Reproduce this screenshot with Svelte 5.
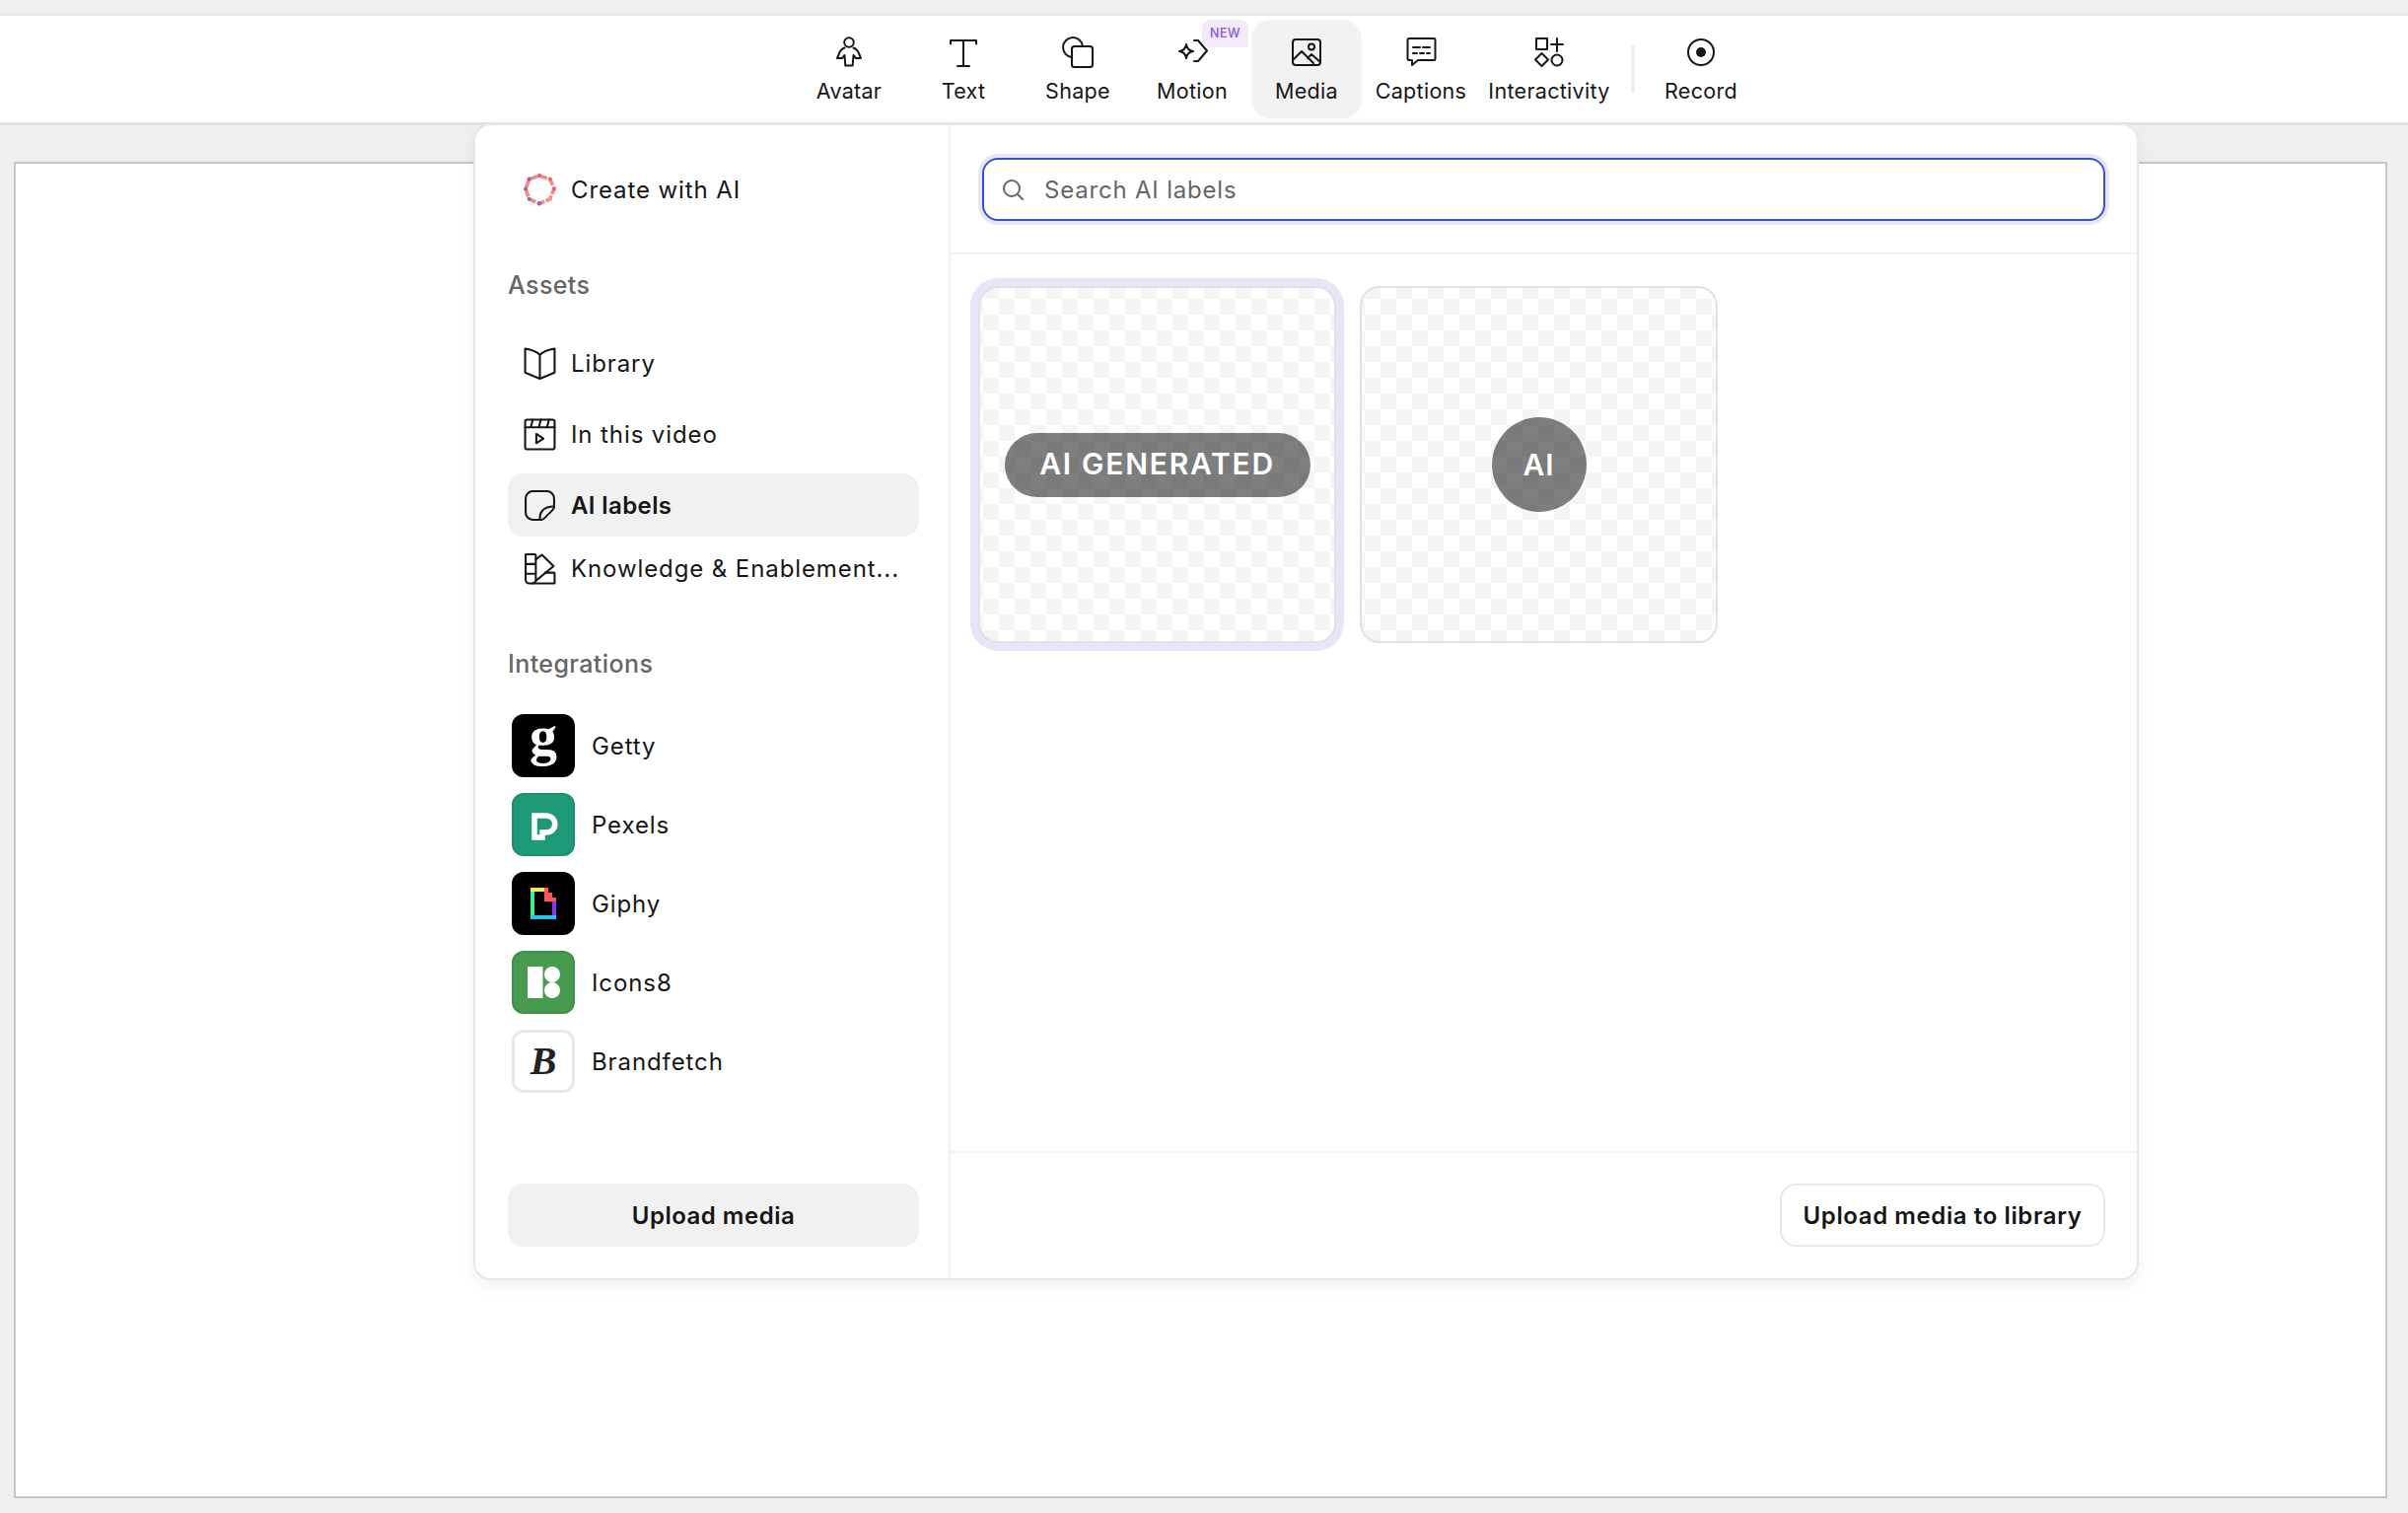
<script>
	const tools = ['Avatar', 'Text', 'Shape', 'Motion', 'Media', 'Captions', 'Interactivity'];
	const assets = [
		{ id: 'library', label: 'Library' },
		{ id: 'video', label: 'In this video' },
		{ id: 'labels', label: 'AI labels', active: true },
		{ id: 'brand', label: 'Knowledge & Enablement...' }
	];
	const integrations = ['Getty', 'Pexels', 'Giphy', 'Icons8', 'Brandfetch'];
	// corners of the "Create with AI" ring
	const ringPoints = [
		[15.5, 2, '#d9647c'],
		[26, 5.5, '#ee6a6a'],
		[30, 15, '#e8607a'],
		[26, 25, '#f0a090'],
		[15.5, 29.5, '#a05cc8'],
		[5.5, 25, '#9a5cc8'],
		[2, 15, '#b65cb0'],
		[5.5, 5.5, '#9a5cc8']
	];
	const ringOutline = ringPoints.map((p) => `${p[0]},${p[1]}`).join(' ');
</script>

<div class="page">
	<div class="topband"></div>
	<header class="toolbar">
		{#each tools as t}
			<div class="tool" class:on={t === 'Media'} class:wide={t === 'Interactivity'}>
				{#if t === 'Motion'}<span class="new">NEW</span>{/if}
				<svg class="tool-ico" viewBox="0 0 32 32" fill="none" stroke="currentColor" stroke-width="2" stroke-linecap="round" stroke-linejoin="round">
					{#if t === 'Avatar'}
						<circle cx="16" cy="6" r="4.800"/>
						<path d="M11.500 11.500c-3 1-5 3.500-6 7l-1.500 3.500h5l2.500-3 .8 10.500h7.400l.8-10.500 2.500 3h5l-1.500-3.500c-1-3.500-3-6-6-7"/>
					{:else if t === 'Text'}
						<path d="M3 7.500V4h26v3.500M16 4v26M10 30h12"/>
					{:else if t === 'Shape'}
						<path d="M10 21a10 10 0 1 1 11-11"/>
						<rect x="10" y="10" width="21" height="21" rx="2.500"/>
					{:else if t === 'Motion'}
						<path d="M10 8c.6 4.400 2.600 6.400 7 7-4.400.6-6.400 2.600-7 7-.6-4.400-2.600-6.400-7-7 4.400-.6 6.400-2.600 7-7Z"/>
						<path d="m18 4 4 0 9 10.500-9 10.500-4 0"/>
					{:else if t === 'Media'}
						<rect x="2" y="3" width="28" height="26" rx="3"/>
						<circle cx="21" cy="10.500" r="3"/>
						<path d="m2 24 9-9 12 12M17 22l4-4 9 8"/>
					{:else if t === 'Captions'}
						<path d="M4 2h25a1.500 1.500 0 0 1 1.500 1.500v19a1.500 1.500 0 0 1-1.500 1.500H13l-6 5v-5H4a1.500 1.500 0 0 1-1.500-1.500v-19A1.500 1.500 0 0 1 4 2Z"/>
						<path d="M8 11h7M18 11h7M8 17h4M15 17h4M22 17h3"/>
					{:else}
						<rect x="3" y="2" width="11" height="11"/>
						<path d="M24 2v13M18 8h12"/>
						<path d="m8.500 17 6.500 6.500-6.500 6.500L2 23.500Z"/>
						<circle cx="24" cy="24" r="5.500"/>
					{/if}
				</svg>
				<span class="tool-label">{t}</span>
			</div>
		{/each}
		<span class="tool-sep"></span>
		<div class="tool">
			<svg class="tool-ico" viewBox="0 0 32 32" fill="none" stroke="currentColor" stroke-width="2">
				<circle cx="16" cy="16" r="13"/>
				<circle cx="16" cy="16" r="5" fill="currentColor" stroke="none"/>
			</svg>
			<span class="tool-label">Record</span>
		</div>
	</header>

	<main class="stage">
		<div class="canvas"></div>
	</main>

	<section class="panel">
		<aside class="side">
			<div class="row create">
				<svg class="row-ico" viewBox="0 0 32 32" fill="none">
					<polygon points={ringOutline} stroke="#f28a80" stroke-width="3.500" stroke-dasharray="8 1.500"/>
					{#each ringPoints as [x, y, c]}
						<circle cx={x} cy={y} r="2" fill={c}/>
					{/each}
				</svg>
				<span>Create with AI</span>
			</div>

			<h3 class="head assets-head">Assets</h3>
			<ul class="asset-list">
				{#each assets as a}
					<li class="row" class:active={a.active}>
						<svg class="row-ico" viewBox="0 0 32 32" fill="none" stroke="currentColor" stroke-width="2" stroke-linecap="round" stroke-linejoin="round">
							{#if a.id === 'library'}
								<path d="M16 7.500C13 4.500 8 2.500 1.500 1.500v23.500l14.500 6 14.500-6V1.500C24 2.500 19 4.500 16 7.500Zm0 0V31"/>
							{:else if a.id === 'video'}
								<rect x="1.500" y="1.500" width="29" height="29" rx="2"/>
								<path d="M1.500 9h29M9 1.500 7 9M17 1.500 15 9M25 1.500 23 9"/>
								<path d="M12.500 15.500v9l7-4.500Z"/>
							{:else if a.id === 'labels'}
								<path d="M17 30H9a7 7 0 0 1-7-7V9a7 7 0 0 1 7-7h14a7 7 0 0 1 7 7v8c0 1.500-.5 2.500-1.500 3.500l-8 8c-1 1-2 1.500-3.500 1.500Z"/>
								<path d="M16 30c-.5-7 3-13 14-13"/>
							{:else}
								<path d="M2 2h9a1 1 0 0 1 1 1v24a3.500 3.500 0 0 1-3.500 3.500h-3A3.500 3.500 0 0 1 2 27V2ZM2 11.500h10M2 21h10"/>
								<path d="m12 7 6-4.500 11.500 11L12 28"/>
								<path d="M21 20h8.500a1 1 0 0 1 1 1v9.500H9"/>
							{/if}
						</svg>
						<span>{a.label}</span>
					</li>
				{/each}
			</ul>

			<h3 class="head int-head">Integrations</h3>
			<ul class="int-list">
				{#each integrations as name}
					<li class="int">
						<span class="tile {name.toLowerCase()}">
							{#if name === 'Getty'}
								<span class="getty-g">g</span>
							{:else if name === 'Pexels'}
								<svg viewBox="0 0 64 64" width="64" height="64"><path d="M23 23h12a8.500 8.500 0 0 1 .5 17H31v5h-8Z" fill="none" stroke="#fff" stroke-width="5.500"/></svg>
							{:else if name === 'Giphy'}
								<svg viewBox="0 0 64 64" width="64" height="64">
									<rect x="19" y="16" width="4" height="32" fill="#3df28f"/>
									<rect x="19" y="16" width="15" height="4" fill="#f7e75a"/>
									<rect x="41" y="26" width="4" height="22" fill="#8a32f5"/>
									<rect x="19" y="44" width="26" height="4" fill="#22c3f5"/>
									<path d="M33 16h4v5h4v5h4v4H33Z" fill="#fb5757"/>
								</svg>
							{:else if name === 'Icons8'}
								<svg viewBox="0 0 64 64" width="64" height="64" fill="#fff">
									<rect x="16" y="16" width="15.500" height="32"/>
									<circle cx="41" cy="24" r="8"/>
									<circle cx="41" cy="40" r="8"/>
								</svg>
							{:else}
								<span class="brand-b">B</span>
							{/if}
						</span>
						<span class="int-name">{name}</span>
					</li>
				{/each}
			</ul>

			<button class="upload">Upload media</button>
		</aside>

		<div class="content">
			<div class="search-wrap">
				<div class="search">
					<svg viewBox="0 0 24 24" width="24" height="24" fill="none" stroke="#666" stroke-width="2" stroke-linecap="round"><circle cx="11" cy="11" r="8"/><path d="m17 17 5 5"/></svg>
					<span>Search AI labels</span>
				</div>
			</div>
			<div class="grid">
				<div class="thumb selected"><span class="pill">AI GENERATED</span></div>
				<div class="thumb"><span class="circle">AI</span></div>
			</div>
			<footer class="foot">
				<button class="upload-lib">Upload media to library</button>
			</footer>
		</div>
	</section>
</div>

<style>
	:global(body) {
		margin: 0;
		background: #efeff1;
		font-family: Inter, 'Liberation Sans', sans-serif;
		color: #161616;
	}
	.page {
		position: relative;
		height: 1534px;
		display: flex;
		flex-direction: column;
		overflow: hidden;
	}
	.topband {
		height: 14px;
		flex-shrink: 0;
	}
	.toolbar {
		height: 108px;
		flex-shrink: 0;
		box-sizing: content-box;
		background: #fff;
		border-top: 2px solid #e6e6e8;
		border-bottom: 3px solid #e4e4e6;
		padding-left: 805px;
		display: flex;
		align-items: center;
		gap: 4px;
	}
	.tool {
		position: relative;
		width: 112px;
		height: 100px;
		flex-shrink: 0;
		border-radius: 20px;
		display: flex;
		flex-direction: column;
		align-items: center;
		gap: 9px;
		padding-top: 17px;
		box-sizing: border-box;
	}
	.tool.wide {
		width: 140px;
	}
	.tool.on {
		background: #f2f2f2;
	}
	.tool-ico {
		width: 32px;
		height: 32px;
		flex-shrink: 0;
	}
	.tool-label {
		font-size: 21.500px;
		line-height: 28px;
		letter-spacing: 0.3px;
		white-space: nowrap;
	}
	.tool-sep {
		width: 4px;
		height: 48px;
		margin: 0 7px 0 9px;
		border-radius: 2px;
		background: #efeff1;
		flex-shrink: 0;
	}
	.new {
		position: absolute;
		top: 0;
		right: -1px;
		height: 28px;
		padding: 0 8px;
		border-radius: 8px 8px 0 8px;
		background: #f1ebfb;
		color: #8a55e0;
		font-size: 12.500px;
		font-weight: 500;
		letter-spacing: 0.5px;
		line-height: 28px;
	}

	.stage {
		flex: 1;
		padding: 37px 21px 15px 14px;
		display: flex;
	}
	.canvas {
		flex: 1;
		background: #fff;
		border: 2px solid #c6c6c8;
	}

	.panel {
		position: absolute;
		left: 482px;
		top: 127px;
		width: 1685px;
		height: 1169px;
		display: flex;
		background: #fff;
		border-radius: 16px;
		box-shadow: 0 0 0 2px #e8e8e8, 0 6px 18px rgba(0, 0, 0, 0.08);
		overflow: hidden;
	}
	.side {
		width: 482px;
		flex-shrink: 0;
		box-sizing: border-box;
		padding: 33px 30px 32px 33px;
		border-right: 2px solid #f0f0f0;
		display: flex;
		flex-direction: column;
		font-size: 24px;
	}
	.row {
		height: 64px;
		display: flex;
		align-items: center;
		gap: 15px;
		padding-left: 16px;
		border-radius: 16px;
		letter-spacing: 0.9px;
		white-space: nowrap;
	}
	.row-ico {
		width: 33px;
		height: 33px;
		flex-shrink: 0;
	}
	.row.active {
		background: #f1f1f1;
		font-weight: 600;
		letter-spacing: 0.4px;
	}
	.head {
		margin: 0;
		font-size: 25px;
		line-height: 30px;
		font-weight: 500;
		letter-spacing: 0.4px;
		color: #666669;
	}
	.assets-head {
		margin-top: 50px;
		margin-bottom: 32px;
	}
	.int-head {
		margin-top: 50px;
		margin-bottom: 35.500px;
	}
	.asset-list,
	.int-list {
		list-style: none;
		margin: 0;
		padding: 0;
		display: flex;
		flex-direction: column;
	}
	.asset-list {
		gap: 8px;
	}
	.asset-list li:last-child {
		margin-top: -8px;
	}
	.int-list {
		gap: 16px;
		padding-left: 4px;
	}
	.int {
		height: 64px;
		display: flex;
		align-items: center;
		gap: 17px;
		letter-spacing: 0.9px;
	}
	.int-name {
		padding-top: 2px;
	}
	.tile {
		width: 64px;
		height: 64px;
		box-sizing: border-box;
		border-radius: 12px;
		display: flex;
		align-items: center;
		justify-content: center;
		flex-shrink: 0;
	}
	.tile svg {
		flex-shrink: 0;
	}
	.tile.getty,
	.tile.giphy {
		background: #000;
	}
	.tile.pexels {
		background: #1f9a78;
		border: 2px solid #218d70;
	}
	.tile.icons8 {
		background: #479b50;
		border: 2px solid #3f8f47;
	}
	.tile.brandfetch {
		background: #fff;
		border: 3px solid #e8e8e8;
	}
	.getty-g {
		color: #fff;
		font: 700 56px/1 'Liberation Serif', serif;
		margin-top: -20px;
		letter-spacing: 0;
	}
	.brand-b {
		color: #222;
		font: italic 700 40px/1 'Liberation Serif', serif;
		letter-spacing: 0;
	}
	.upload {
		margin-top: auto;
		height: 64px;
		border: 0;
		border-radius: 16px;
		background: #f1f1f1;
		color: #161616;
		font: 600 24px Inter, sans-serif;
		letter-spacing: 0.5px;
	}

	.content {
		flex: 1;
		min-width: 0;
		display: flex;
		flex-direction: column;
	}
	.search-wrap {
		height: 131px;
		flex-shrink: 0;
		box-sizing: border-box;
		padding: 33px 32px 0 32px;
		border-bottom: 2px solid #f0f0f0;
	}
	.search {
		height: 64px;
		box-sizing: border-box;
		border: 2px solid #3650d0;
		border-radius: 16px;
		box-shadow: 0 0 0 4px #e5e7f9;
		display: flex;
		align-items: center;
		gap: 20px;
		padding-left: 17px;
		color: #666669;
		font-size: 24px;
		letter-spacing: 0.8px;
	}
	.grid {
		flex: 1;
		display: flex;
		align-items: flex-start;
		gap: 24px;
		padding: 32px 0 0 28px;
	}
	.thumb {
		width: 363px;
		height: 362px;
		box-sizing: border-box;
		border: 2px solid #e2e2e2;
		border-radius: 20px;
		background-color: #fff;
		background-image: conic-gradient(#f4f4f4 25%, #fff 0 50%, #f4f4f4 0 75%, #fff 0);
		background-size: 32px 32px;
		background-position: -13px -5px;
		display: flex;
		align-items: center;
		justify-content: center;
		color: #fff;
	}
	.thumb.selected {
		box-shadow: 0 0 0 8px #e5e7f9;
	}
	.pill {
		width: 310px;
		height: 65px;
		box-sizing: border-box;
		padding-bottom: 2px;
		border-radius: 33px;
		background: rgba(0, 0, 0, 0.5);
		display: flex;
		align-items: center;
		justify-content: center;
		font-size: 30px;
		font-weight: 600;
		letter-spacing: 1.750px;
	}
	.circle {
		width: 96px;
		height: 96px;
		border-radius: 50%;
		background: rgba(0, 0, 0, 0.5);
		display: flex;
		align-items: center;
		justify-content: center;
		font-size: 30px;
		font-weight: 600;
		letter-spacing: 1px;
	}
	.foot {
		height: 129px;
		flex-shrink: 0;
		box-sizing: border-box;
		border-top: 2px solid #f0f0f0;
		padding: 31px 32px 0 0;
		display: flex;
		justify-content: flex-end;
		align-items: flex-start;
	}
	.upload-lib {
		width: 330px;
		height: 64px;
		border: 2px solid #e8e8e8;
		border-radius: 16px;
		background: #fff;
		color: #161616;
		font: 600 24px Inter, sans-serif;
		letter-spacing: 0.6px;
		white-space: nowrap;
		padding: 0;
	}
</style>
